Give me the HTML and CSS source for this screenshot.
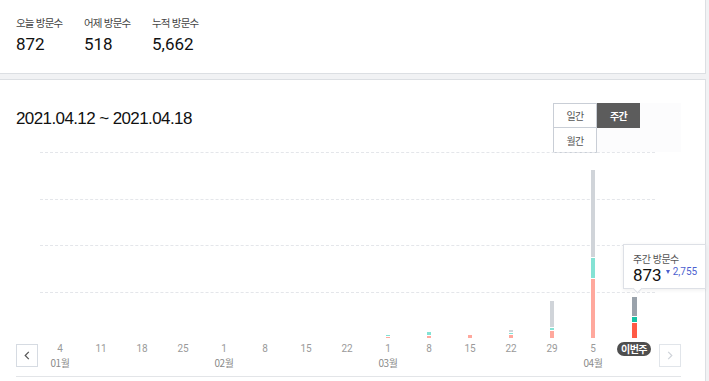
FILE: index.html
```html
<!DOCTYPE html>
<html lang="ko">
<head>
<meta charset="utf-8">
<title>방문 통계</title>
<link rel="stylesheet" href="styles.css">
</head>
<body>
<div class="page">
  <section class="summary">
    <div class="stat"><div class="stat-label">오늘 방문수</div><div class="stat-value">872</div></div>
    <div class="stat"><div class="stat-label">어제 방문수</div><div class="stat-value">518</div></div>
    <div class="stat"><div class="stat-label">누적 방문수</div><div class="stat-value">5,662</div></div>
  </section>

  <section class="chart-card">
    <header class="chart-head">
      <h2 class="range">2021.04.12 ~ 2021.04.18</h2>
      <div class="toggle">
        <button class="tg">일간</button>
        <button class="tg active">주간</button>
        <button class="tg tg-month">월간</button>
      </div>
    </header>

    <div class="chart">
      <div class="plot">
        <div class="gridlines"><i></i><i></i><i></i><i></i></div>
        <div class="col"></div>
        <div class="col"></div>
        <div class="col"></div>
        <div class="col"></div>
        <div class="col"></div>
        <div class="col"></div>
        <div class="col"></div>
        <div class="col"></div>
        <div class="col"><div class="bar"><span class="s-teal" style="height:1px"></span><span class="s-red" style="height:1px"></span></div></div>
        <div class="col"><div class="bar"><span class="s-teal" style="height:3px"></span><span class="s-red" style="height:2px"></span></div></div>
        <div class="col"><div class="bar"><span class="s-red" style="height:3px"></span></div></div>
        <div class="col"><div class="bar"><span class="s-gray" style="height:2px"></span><span class="s-teal" style="height:1px"></span><span class="s-red" style="height:3px"></span></div></div>
        <div class="col"><div class="bar"><span class="s-gray" style="height:26px"></span><span class="s-teal" style="height:2px"></span><span class="s-red" style="height:7px"></span></div></div>
        <div class="col"><div class="bar"><span class="s-gray" style="height:87px"></span><span class="s-teal" style="height:20px"></span><span class="s-red" style="height:59px"></span></div></div>
        <div class="col"><div class="bar current"><span class="s-gray" style="height:19px"></span><span class="s-teal" style="height:5px"></span><span class="s-red" style="height:15px"></span></div></div>

        <div class="tooltip">
          <div class="tt-label">주간 방문수</div>
          <div class="tt-row"><span class="tt-value">873</span><span class="tt-delta"><span class="tt-arrow"></span>2,755</span></div>
        </div>
      </div>

      <div class="axis">
        <button class="nav prev" aria-label="이전">
          <svg width="6" height="9" viewBox="0 0 6 9"><path d="M4.8 0.8 L1.2 4.5 L4.8 8.2" fill="none" stroke="#555" stroke-width="1.2"/></svg>
        </button>
        <div class="ticks">
          <div class="tick"><span class="day">4</span><span class="month">01월</span></div>
          <div class="tick"><span class="day">11</span></div>
          <div class="tick"><span class="day">18</span></div>
          <div class="tick"><span class="day">25</span></div>
          <div class="tick"><span class="day">1</span><span class="month">02월</span></div>
          <div class="tick"><span class="day">8</span></div>
          <div class="tick"><span class="day">15</span></div>
          <div class="tick"><span class="day">22</span></div>
          <div class="tick"><span class="day">1</span><span class="month">03월</span></div>
          <div class="tick"><span class="day">8</span></div>
          <div class="tick"><span class="day">15</span></div>
          <div class="tick"><span class="day">22</span></div>
          <div class="tick"><span class="day">29</span></div>
          <div class="tick"><span class="day">5</span><span class="month">04월</span></div>
          <div class="tick"><span class="pill">이번주</span></div>
        </div>
        <button class="nav next" aria-label="다음">
          <svg width="6" height="9" viewBox="0 0 6 9"><path d="M1.2 0.8 L4.8 4.5 L1.2 8.2" fill="none" stroke="#cfd3d9" stroke-width="1.2"/></svg>
        </button>
      </div>
    </div>
  </section>
</div>
</body>
</html>
```

FILE: styles.css
```css
* { box-sizing: border-box; margin: 0; padding: 0; }

html, body {
  width: 709px;
  height: 381px;
  overflow: hidden;
}

body {
  background: #f1f2f4;
  font-family: "Noto Sans CJK KR", "Noto Sans", sans-serif;
  color: #222;
}

.page { width: 706px; }

/* summary */
.summary {
  background: #fff;
  height: 74px;
  border-bottom: 1px solid #dcdfe3;
  border-right: 1px solid #dcdfe3;
  display: grid;
  grid-template-columns: repeat(3, 68px);
  align-content: start;
  padding: 15px 0 0 16px;
}

.stat-label {
  font-size: 10.5px;
  line-height: 16px;
  color: #444;
  letter-spacing: -0.8px;
  white-space: nowrap;
}

.stat-value {
  font-family: Roboto, "Noto Sans", sans-serif;
  font-size: 17px;
  line-height: 20px;
  margin-top: 3px;
  color: #111;
}

/* chart card */
.chart-card {
  margin-top: 5px;
  background: #fff;
  border-top: 1px solid #dcdfe3;
  border-right: 1px solid #dcdfe3;
  height: 320px;
  padding: 23px 24px 0 16px;
}

.chart-head {
  display: flex;
  justify-content: space-between;
  align-items: flex-start;
  height: 49px;
}

.range {
  font-family: "Liberation Sans", Arial, sans-serif;
  font-weight: normal;
  font-size: 17px;
  letter-spacing: -0.6px;
  line-height: 24px;
  margin-top: 4px;
  color: #111;
}

.toggle {
  width: 128px;
  height: 49px;
  display: grid;
  grid-template-columns: 44px 43px;
  grid-template-rows: 25px 25px;
  align-content: start;
  background: #fcfcfd;
}

.tg {
  font-family: inherit;
  font-size: 10px;
  letter-spacing: -0.6px;
  border: 1px solid #c9ced6;
  background: #fff;
  color: #555;
  cursor: pointer;
}

.tg.active {
  background: #5c5c5c;
  border-color: #5c5c5c;
  color: #fff;
  font-weight: bold;
}

.tg-month { margin-top: -1px; }

/* chart */
.chart {
  display: grid;
  grid-template-columns: 23.5px 615px 26.5px;
  grid-template-rows: 186px 38px;
  border-bottom: 1px solid #e3e5e8;
}

.plot {
  grid-column: 2;
  grid-row: 1;
  position: relative;
  display: grid;
  grid-template-columns: repeat(15, 41px);
  align-items: end;
}

.gridlines {
  position: absolute;
  inset: 0;
  display: grid;
  grid-template-rows: repeat(4, 1fr);
}

.gridlines i {
  border-top: 1px dashed #e4e6ea;
}

.col {
  position: relative;
  display: flex;
  justify-content: center;
  align-items: flex-end;
  height: 100%;
}

.bar {
  display: flex;
  flex-direction: column;
  gap: 1px;
  width: 4px;
}

.bar span { display: block; }
.s-gray { background: #d0d4d9; }
.s-teal { background: #84e2d4; }
.s-red  { background: #ffa89d; }

.bar.current { width: 5px; margin-left: 1px; }
.bar.current .s-gray { background: #9aa2ab; }
.bar.current .s-teal { background: #16c3a6; }
.bar.current .s-red  { background: #ff5a45; }

/* tooltip */
.tooltip {
  position: absolute;
  left: 583.5px;
  top: 92px;
  width: 83px;
  height: 45px;
  background: #fff;
  border: 1px solid #dde0e6;
  box-shadow: 0 1px 4px rgba(0, 0, 0, 0.07);
  padding: 7px 0 0 9px;
  z-index: 2;
}

.tooltip::after {
  content: "";
  position: absolute;
  left: 10px;
  bottom: -4px;
  width: 6px;
  height: 6px;
  background: #fff;
  border-right: 1px solid #dde0e6;
  border-bottom: 1px solid #dde0e6;
  transform: rotate(45deg);
}

.tt-label {
  font-size: 10px;
  line-height: 13px;
  color: #555;
  letter-spacing: -0.5px;
}

.tt-row {
  display: flex;
  align-items: flex-start;
}

.tt-value {
  font-family: Roboto, sans-serif;
  font-size: 17px;
  line-height: 20px;
  color: #111;
}

.tt-delta {
  display: flex;
  align-items: center;
  margin-left: 4px;
  font-family: Roboto, sans-serif;
  font-size: 10px;
  line-height: 12px;
  margin-top: 1px;
  color: #4d5fcf;
}

.tt-arrow {
  width: 0;
  height: 0;
  border-left: 2.5px solid transparent;
  border-right: 2.5px solid transparent;
  border-top: 4px solid #4d5fcf;
  margin-right: 3px;
}

/* axis */
.axis { display: contents; }

.nav {
  grid-row: 2;
  width: 22px;
  height: 23px;
  margin-top: 6px;
  border: 1px solid #d6dbe2;
  background: #fff;
  display: flex;
  align-items: center;
  justify-content: center;
}

.nav.prev { grid-column: 1; justify-self: start; }
.nav.next { grid-column: 3; justify-self: end; border-color: #e1e5ea; }

.ticks {
  grid-column: 2;
  grid-row: 2;
  display: grid;
  grid-template-columns: repeat(15, 41px);
  padding-top: 4px;
}

.tick {
  display: flex;
  flex-direction: column;
  align-items: center;
}

.day {
  font-family: Roboto, "Noto Sans CJK KR", sans-serif;
  font-size: 10px;
  line-height: 14px;
  color: #9a9a9a;
}

.month {
  font-size: 10px;
  line-height: 14px;
  color: #8a8a8a;
  letter-spacing: -0.4px;
}

.pill {
  display: inline-block;
  height: 14px;
  padding: 0 4px;
  border-radius: 7px;
  background: #4e4e4e;
  color: #fff;
  font-size: 10px;
  font-weight: bold;
  line-height: 14px;
  letter-spacing: -0.6px;
}
```
